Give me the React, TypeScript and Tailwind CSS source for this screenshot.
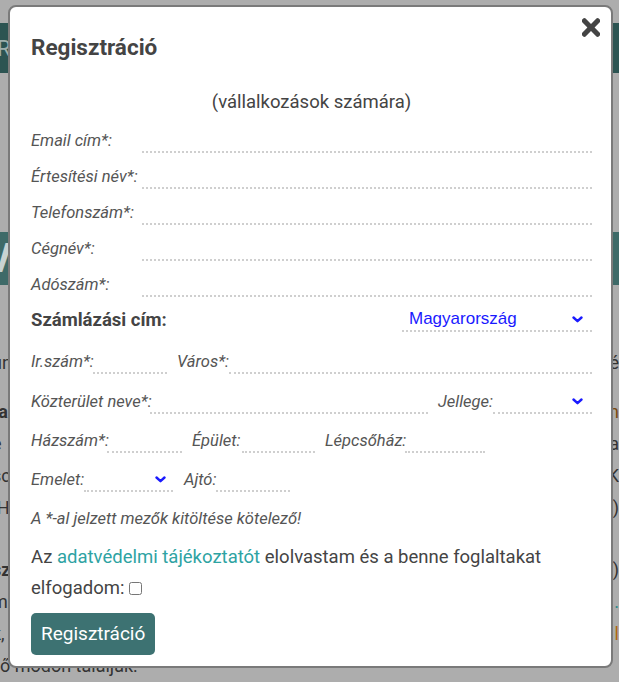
import React from 'react';

const font = { fontFamily: 'Roboto, "Liberation Sans", sans-serif' };

function Chevron() {
  return (
    <svg width="11" height="7" viewBox="0 0 11 7" className="shrink-0">
      <path d="M1.5 1.5 L5.5 5.2 L9.5 1.5" fill="none" stroke="#1a1aff" strokeWidth="2.4" strokeLinecap="round" strokeLinejoin="round" />
    </svg>
  );
}

function Field({ className = '' }: { className?: string }) {
  return <div className={`h-6 border-b-2 border-dotted border-[#cfcfcf] ${className}`} />;
}

function Label({ children, className = '' }: { children: React.ReactNode; className?: string }) {
  return <span className={`block h-6 leading-6 text-[16.5px] italic text-[#555] whitespace-nowrap shrink-0 ${className}`}>{children}</span>;
}

export default function App() {
  const rows = ['Email cím*:', 'Értesítési név*:', 'Telefonszám*:', 'Cégnév*:', 'Adószám*:'];

  return (
    <div className="relative h-[682px] w-full overflow-hidden bg-[#adadad]" style={font}>
      {/* page behind the overlay */}
      <div className="pt-[23px] text-[18px] text-[#333]">
        <div className="h-[50px] bg-[#2c5452] flex items-center text-[22px] text-[#9fb0ad] -ml-[3px]">R</div>
        <div className="h-[159px]" />
        <div className="h-[53px] bg-[#3e6a68] flex items-center text-[40px] font-bold text-[#c8d3d2] -ml-[14px]">V</div>
        <div className="mt-[62px] flex flex-col leading-[32px] -ml-[8px]">
          <div className="flex justify-between"><span>un</span><span>é</span></div>
          <div className="h-[17px]" />
          <div className="flex justify-between"><span className="font-bold">ra</span><span className="text-[#7a4a10]">n</span></div>
          <div className="flex justify-between"><span>e</span><span>a</span></div>
          <div className="flex justify-between"><span>sc</span><span>K</span></div>
          <div className="flex justify-between"><span>.H</span><span>)</span></div>
          <div className="h-[30px]" />
          <div className="flex justify-between"><span className="font-bold">sz</span><span>)</span></div>
          <div className="flex justify-between"><span>m</span><span className="text-[#2a8a8a]">.</span></div>
          <div className="flex justify-between"><span>k,</span><span className="text-[#b06a10]">l</span></div>
          <div className="flex justify-between pl-[8px]"><span>ő módon találják.</span></div>
        </div>
      </div>

      {/* modal */}
      <div className="absolute left-[8px] top-[5px] w-[605px] h-[663px] rounded-[8px] border-2 border-[#7a7a7a] bg-white pl-[21px] pr-[19px] pt-[25px] text-[#444]">
        <button className="absolute right-[11px] top-[11px]">
          <svg width="18" height="19" viewBox="9 80 334 352">
            <path
              fill="#444"
              d="M242.72 256l100.07-100.07c12.28-12.28 12.28-32.19 0-44.48l-22.24-22.24c-12.28-12.28-32.19-12.28-44.48 0L176 189.28 75.93 89.21c-12.28-12.28-32.19-12.28-44.48 0L9.21 111.45c-12.28 12.28-12.28 32.19 0 44.48L109.28 256 9.21 356.07c-12.28 12.28-12.28 32.19 0 44.48l22.24 22.24c12.28 12.28 32.2 12.28 44.48 0L176 322.72l100.07 100.07c12.28 12.28 32.2 12.28 44.48 0l22.24-22.24c12.28-12.28 12.28-32.19 0-44.48L242.72 256z"
            />
          </svg>
        </button>

        <h4 className="text-[22.5px] leading-[30px] font-bold">Regisztráció</h4>
        <p className="mt-[26px] text-center text-[18.5px] leading-[28px]">(vállalkozások számára)</p>

        <div className="mt-[13px] flex flex-col gap-3">
          {rows.map((r) => (
            <div key={r} className="flex items-end">
              <Label className="w-[111px]">{r}</Label>
              <Field className="flex-1" />
            </div>
          ))}
        </div>

        <div className="mt-[11px] flex items-end justify-between">
          <span className="block h-6 leading-6 text-[18.5px] font-bold">Számlázási cím:</span>
          <div className="w-[190px] h-6 border-b-2 border-dotted border-[#cfcfcf] flex items-center justify-between pl-[7px] pr-[9px]">
            <span className="text-[17px] text-[#1a1aff]" style={{ fontFamily: '"Liberation Sans", Arial, sans-serif' }}>Magyarország</span>
            <Chevron />
          </div>
        </div>

        <div className="mt-[18px] flex items-end">
          <Label className="w-[62px]">Ir.szám*:</Label>
          <Field className="w-[74px]" />
          <Label className="ml-[10px] w-[52px]">Város*:</Label>
          <Field className="flex-1" />
        </div>

        <div className="mt-[16px] flex items-end">
          <Label className="w-[119px]">Közterület neve*:</Label>
          <Field className="w-[278px]" />
          <Label className="ml-[10px] w-[55px]">Jellege:</Label>
          <div className="flex-1 h-6 border-b-2 border-dotted border-[#cfcfcf] flex items-center justify-end pr-[9px]">
            <Chevron />
          </div>
        </div>

        <div className="mt-[15px] flex items-end">
          <Label className="w-[76px]">Házszám*:</Label>
          <Field className="w-[75px]" />
          <Label className="ml-[10px] w-[50px]">Épület:</Label>
          <Field className="w-[73px]" />
          <Label className="ml-[10px] w-[80px]">Lépcsőház:</Label>
          <Field className="w-[80px]" />
        </div>

        <div className="mt-[15px] flex items-end">
          <Label className="w-[53px]">Emelet:</Label>
          <div className="w-[89px] h-6 border-b-2 border-dotted border-[#cfcfcf] flex items-center justify-end pr-[7px]">
            <Chevron />
          </div>
          <Label className="ml-[11px] w-[32px]">Ajtó:</Label>
          <Field className="w-[74px]" />
        </div>

        <p className="mt-[16px] text-[16.5px] leading-[22px] italic text-[#555]">A *-al jelzett mezők kitöltése kötelező!</p>

        <p className="mt-[12px] text-[18.5px] leading-[31px] text-[#444]">
          Az <a href="#" className="text-[#2ea3a3]">adatvédelmi tájékoztatót</a> elolvastam és a benne foglaltakat elfogadom:{' '}
          <input type="checkbox" className="w-[13px] h-[13px] align-[-1px]" />
        </p>

        <button className="mt-[9px] h-[42px] px-[10px] rounded-[5px] bg-[#3d7272] text-white text-[19px]">Regisztráció</button>
      </div>
    </div>
  );
}
